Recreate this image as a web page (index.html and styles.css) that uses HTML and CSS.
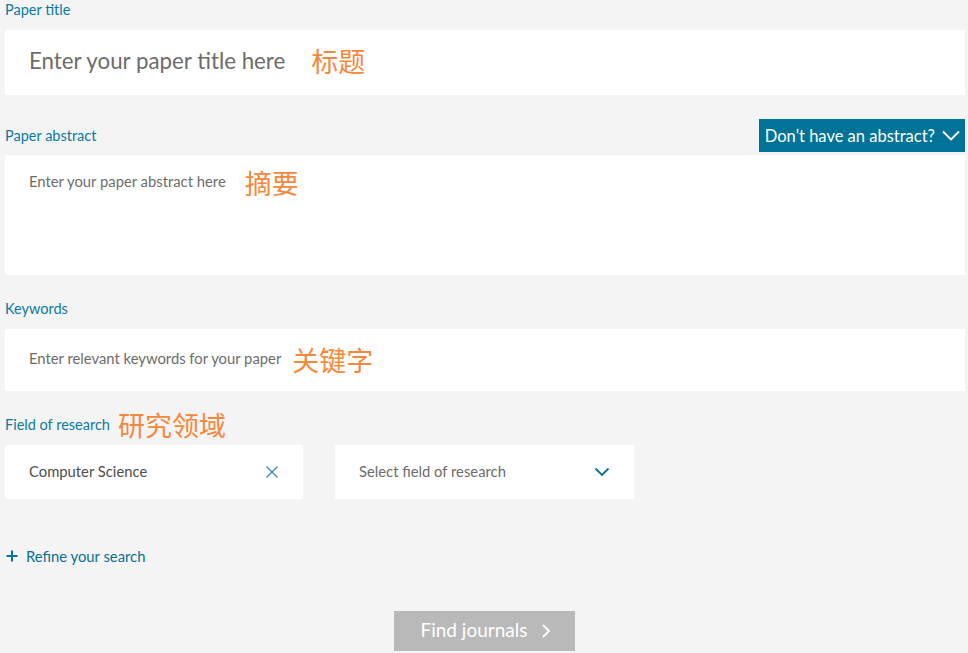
FILE: index.html
```html
<!DOCTYPE html>
<html lang="en">
<head>
<meta charset="utf-8">
<title>Journal Finder</title>
<link rel="stylesheet" href="styles.css">
</head>
<body>
<main class="form">
  <section class="field field-first">
    <div class="label-row"><span class="label">Paper title</span></div>
    <div class="box box-title">
      <span class="ph ph-title">Enter your paper title here</span>
      <span class="note note-title">标题</span>
    </div>
  </section>

  <section class="field field-abstract">
    <div class="label-row label-row-btn">
      <span class="label">Paper abstract</span>
      <button class="abs-btn">Don't have an abstract?
        <svg class="abs-chev" width="18" height="11" viewBox="0 0 18 11"><path d="M1 1.5 L9 9.5 L17 1.5" fill="none" stroke="#fff" stroke-width="1.8"/></svg>
      </button>
    </div>
    <div class="box box-abstract">
      <span class="ph ph-small">Enter your paper abstract here</span>
      <span class="note note-abs">摘要</span>
    </div>
  </section>

  <section class="field">
    <div class="label-row"><span class="label">Keywords</span></div>
    <div class="box box-kw">
      <span class="ph ph-small">Enter relevant keywords for your paper</span>
      <span class="note note-kw">关键字</span>
    </div>
  </section>

  <section class="field">
    <div class="label-row"><span class="label">Field of research</span><span class="note note-field">研究领域</span></div>
    <div class="selects">
      <div class="select">
        <span class="sel-val">Computer Science</span>
        <svg class="sel-icon" width="14" height="14" viewBox="0 0 14 14"><path d="M1.5 1.5 L12.5 12.5 M12.5 1.5 L1.5 12.5" fill="none" stroke="#2f8cb0" stroke-width="1.3"/></svg>
      </div>
      <div class="select select-2">
        <span class="sel-ph">Select field of research</span>
        <svg class="sel-icon" width="16" height="10" viewBox="0 0 16 10"><path d="M1.5 1.5 L8 8 L14.5 1.5" fill="none" stroke="#007398" stroke-width="1.8"/></svg>
      </div>
    </div>
  </section>

  <div class="refine">
    <svg width="12" height="12" viewBox="0 0 12 12"><path d="M6 0.5 V11.5 M0.5 6 H11.5" stroke="#007398" stroke-width="2"/></svg>
    <span>Refine your search</span>
  </div>

  <div class="actions">
    <button class="find"><span class="find-text">Find journals</span>
      <svg width="10" height="16" viewBox="0 0 10 16"><path d="M2 2 L8 8 L2 14" fill="none" stroke="#fff" stroke-width="1.8"/></svg>
    </button>
  </div>
</main>
</body>
</html>
```

FILE: styles.css
```css
html, body {
  margin: 0;
  padding: 0;
  background: #f4f4f4;
}
body {
  font-family: Lato, "Open Sans", "Liberation Sans", sans-serif;
  width: 968px;
  height: 653px;
  overflow: hidden;
}
.form {
  padding: 0 3px 0 5px;
  display: flex;
  flex-direction: column;
}
.field { margin-top: 24px; }
.field-first { margin-top: 0; }
.field-abstract { margin-top: 24px; }
.label-row {
  height: 20px;
  display: flex;
  align-items: center;
  margin-bottom: 10px;
}
.label {
  font-size: 14.5px;
  color: #0a7aa1;
  line-height: 20px;
}
.label-row-btn {
  height: 33px;
  justify-content: space-between;
  margin-bottom: 3px;
}
.abs-btn {
  height: 33px;
  background: #007398;
  color: #fff;
  border: 0;
  font-family: inherit;
  font-size: 16.5px;
  padding: 0 5px 0 6px;
  display: flex;
  align-items: center;
  gap: 7px;
}
.box {
  background: #fff;
  display: flex;
  padding-left: 24px;
}
.box-title {
  height: 65px;
  align-items: center;
}
.ph { color: #6c6c6c; }
.ph-title { font-size: 22.3px; margin-top: -4px; }
.ph-small { font-size: 14.8px; }
.note {
  font-family: "Noto Sans CJK SC", sans-serif;
  color: #f5883c;
  font-size: 27px;
  line-height: 30px;
}
.note-title { margin-left: 26px; margin-top: -3px; }
.box-abstract {
  height: 120px;
  align-items: flex-start;
  padding-top: 13px;
  box-sizing: border-box;
}
.box-abstract .ph { line-height: 26px; }
.note-abs { margin-left: 19px; }
.box-kw {
  height: 62px;
  align-items: center;
}
.box-kw .ph { margin-top: -4px; }
.note-kw { margin-left: 11px; }
.note-field { margin-left: 8px; }
.selects {
  display: flex;
  gap: 32px;
}
.select {
  width: 298px;
  height: 54px;
  background: #fff;
  display: flex;
  align-items: center;
  justify-content: space-between;
  padding: 0 24px;
  box-sizing: border-box;
  font-size: 14.8px;
}
.select-2 { width: 299px; padding-right: 24px; }
.sel-val, .sel-ph { margin-top: -3px; }
.sel-val { color: #4d4d4d; }
.sel-ph { color: #6c6c6c; }
.refine {
  margin-top: 47px;
  display: flex;
  align-items: center;
  gap: 8px;
  color: #0a6f93;
  font-size: 14.8px;
  padding-left: 1px;
  height: 20px;
}
.actions {
  display: flex;
  justify-content: center;
  margin-top: 45px;
  padding-right: 2px;
}
.find {
  width: 181px;
  height: 40px;
  background: #b9b9b9;
  border: 0;
  color: #fff;
  font-family: inherit;
  font-size: 19px;
  display: flex;
  align-items: center;
  justify-content: center;
  gap: 14px;
  padding: 0 0 0 4px;
}
.find-text { margin-top: -3px; }
```
